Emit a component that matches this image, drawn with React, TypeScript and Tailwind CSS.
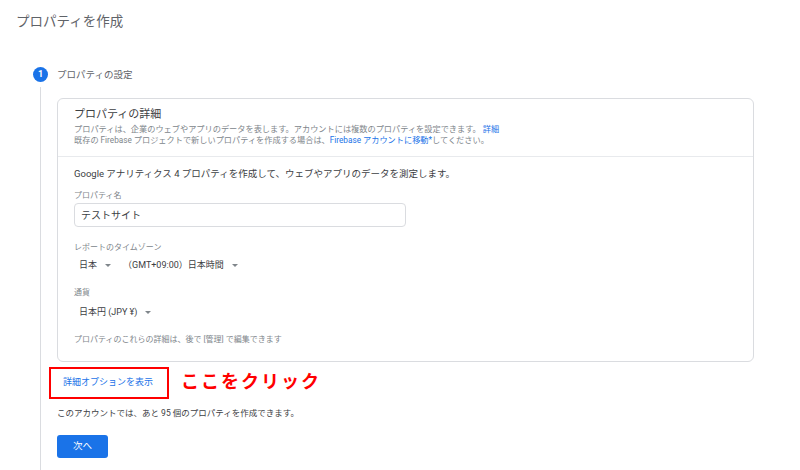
import React from "react";

function Caret() {
  return (
    <span className="inline-block h-0 w-0 border-x-[3px] border-t-[3px] border-x-transparent border-t-[#80868b]" />
  );
}

function Dropdown({ label, className = "" }: { label: string; className?: string }) {
  return (
    <div className={`flex items-center gap-[8px] ${className}`}>
      <span>{label}</span>
      <Caret />
    </div>
  );
}

export default function App() {
  return (
    <div className="flex h-[470px] w-[800px] flex-col overflow-hidden bg-white font-['Roboto','Noto_Sans_CJK_JP',sans-serif] text-[#3c4043]">
      <h1 className="pl-4 pt-[12px] text-[13.5px] leading-[18px] text-[#5f6368]">
        プロパティを作成
      </h1>

      {/* ステップ見出し */}
      <div className="mt-[37px] flex items-center gap-[9px] pl-[33px]">
        <div className="flex h-[15px] w-[15px] items-center justify-center rounded-full bg-[#1a73e8] text-[9px] font-bold leading-none text-white">
          1
        </div>
        <span className="text-[9.5px] leading-[14px] text-[#5f6368]">プロパティの設定</span>
      </div>

      <div className="ml-[40px] mt-[5px] flex-1 border-l border-[#dadce0] pl-[16px] pt-[11px]">
        {/* カード */}
        <div className="w-[697px] rounded-[6px] border border-[#dadce0]">
          <div className="border-b border-[#e8eaed] px-[16px] pb-[10px] pt-[9px]">
            <h2 className="text-[11px] leading-[14px] text-[#3c4043]">プロパティの詳細</h2>
            <p className="mt-[2px] text-[8.2px] leading-[11px] text-[#80868b]">
              プロパティは、企業のウェブやアプリのデータを表します。アカウントには複数のプロパティを設定できます。{" "}
              <span className="text-[#1a73e8]">詳細</span>
            </p>
            <p className="text-[8.2px] leading-[11px] text-[#80868b]">
              既存の Firebase プロジェクトで新しいプロパティを作成する場合は、
              <span className="text-[#1a73e8]">Firebase アカウントに移動*</span>
              してください。
            </p>
          </div>

          <div className="px-[16px] pb-[15px] pt-[10px]">
            <p className="text-[9.5px] leading-[14px] text-[#3c4043]">
              Google アナリティクス 4 プロパティを作成して、ウェブやアプリのデータを測定します。
            </p>

            <div className="mt-[9px] text-[8px] leading-[12px] text-[#80868b]">プロパティ名</div>
            <div className="mt-[1px] flex h-[24px] w-[332px] items-center rounded-[4px] border border-[#dadce0] pl-[6px] text-[10px] text-[#3c4043]">
              テストサイト
            </div>

            <div className="mt-[15px] text-[8px] leading-[12px] text-[#80868b]">
              レポートのタイムゾーン
            </div>
            <div className="mt-[4px] flex items-center pl-[5px] text-[9px] leading-[14px] text-[#3c4043]">
              <Dropdown label="日本" />
              <Dropdown label="（GMT+09:00）日本時間" className="ml-[12px]" />
            </div>

            <div className="mt-[15px] text-[8px] leading-[12px] text-[#80868b]">通貨</div>
            <div className="mt-[6px] flex pl-[5px] text-[9px] leading-[14px] text-[#3c4043]">
              <Dropdown label="日本円 (JPY ¥)" />
            </div>

            <p className="mt-[15px] text-[8px] leading-[12px] text-[#80868b]">
              プロパティのこれらの詳細は、後で [管理] で編集できます
            </p>
          </div>
        </div>

        {/* 詳細オプション */}
        <div className="ml-[-8px] mt-[5px] flex items-center gap-[12px]">
          <div className="flex h-[32px] w-[120px] items-center border-2 border-[#ff0000] pl-[12px] text-[9px] text-[#1a73e8]">
            詳細オプションを表示
          </div>
          <span className="mb-[3px] text-[18px] font-bold leading-none tracking-[2px] text-[#ff0000]">
            ここをクリック
          </span>
        </div>

        <p className="mt-[8px] text-[8.5px] leading-[12px] text-[#3c4043]">
          このアカウントでは、あと 95 個のプロパティを作成できます。
        </p>

        <button
          type="button"
          className="mt-[16px] flex h-[23px] w-[51px] items-center justify-center rounded-[3px] bg-[#1a73e8] text-[9.5px] text-white"
        >
          次へ
        </button>
      </div>
    </div>
  );
}
